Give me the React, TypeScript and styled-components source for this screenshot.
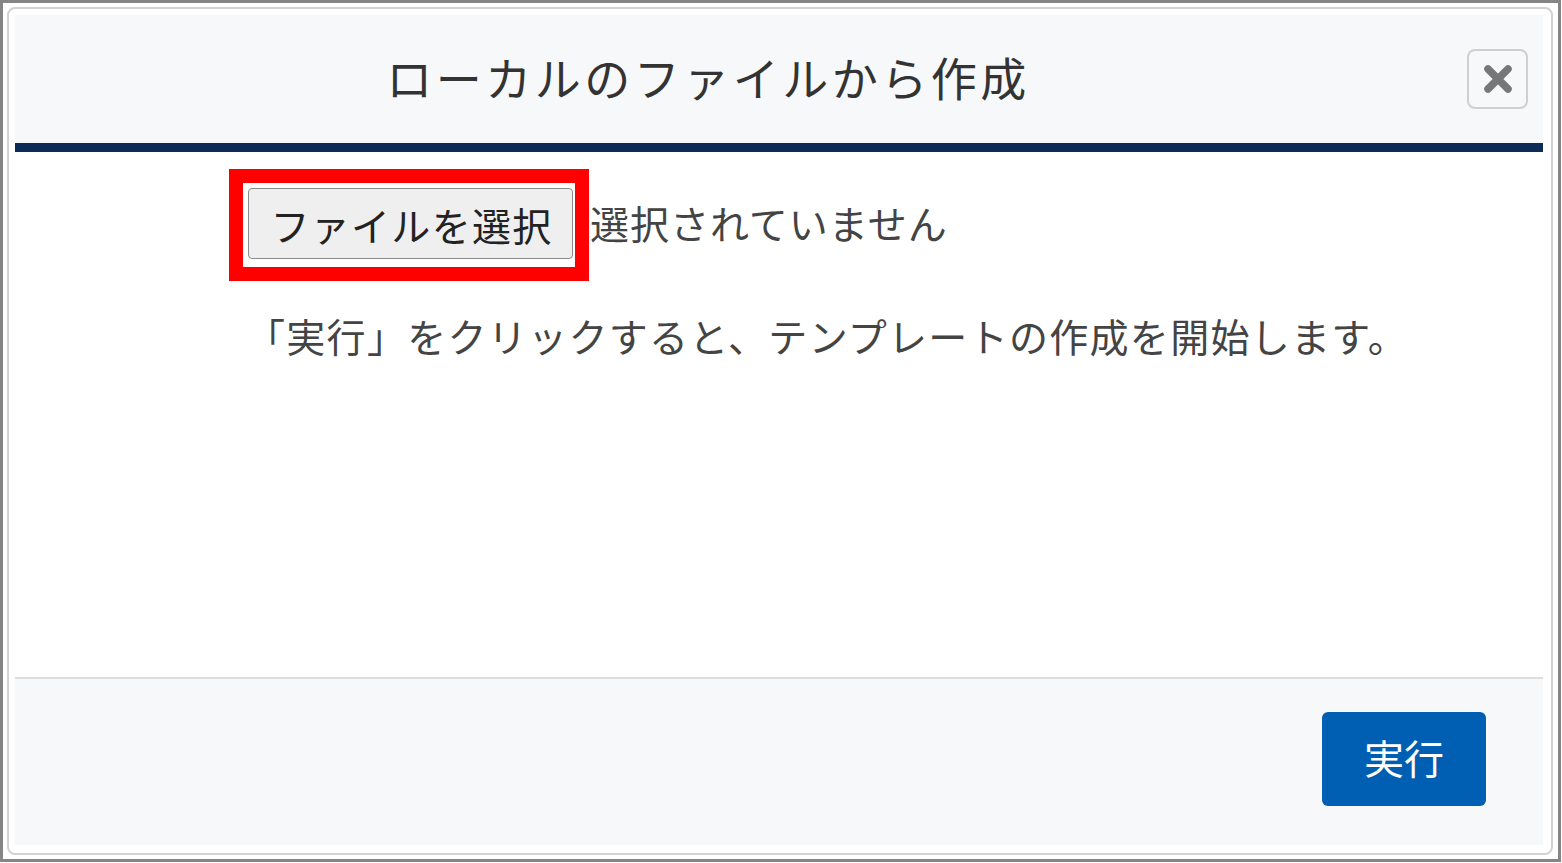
import React from "react";
import styled, { createGlobalStyle } from "styled-components";

const GlobalStyle = createGlobalStyle`
  html, body {
    margin: 0;
    padding: 0;
    background: #ffffff;
  }
  * {
    box-sizing: border-box;
  }
`;

const FONT = `"Noto Sans CJK JP", "Noto Sans", sans-serif`;

export default function App() {
  return (
    <>
      <GlobalStyle />
      <Frame>
        <Card>
          <Header>
            <Title>ローカルのファイルから作成</Title>
            <CloseButton aria-label="閉じる">
              <svg width="32" height="32" viewBox="0 0 32 32">
                <path
                  d="M6 6 L26 26 M26 6 L6 26"
                  stroke="#777"
                  strokeWidth="7.5"
                  strokeLinecap="round"
                />
              </svg>
            </CloseButton>
          </Header>
          <Body>
            <FileRow>
              <Highlight>
                <FileButton>ファイルを選択</FileButton>
              </Highlight>
              <FileName>選択されていません</FileName>
            </FileRow>
            <Message>「実行」をクリックすると、テンプレートの作成を開始します。</Message>
          </Body>
          <Footer>
            <PrimaryButton>実行</PrimaryButton>
          </Footer>
        </Card>
      </Frame>
    </>
  );
}

const Frame = styled.div`
  width: 1561px;
  height: 862px;
  border: 3px solid #858585;
  padding: 4px 5px 4px 4px;
  font-family: ${FONT};
`;

const Card = styled.div`
  height: 100%;
  border: 2px solid #d2d2d2;
  border-radius: 8px;
  padding: 6px 8px 8px 6px;
  display: flex;
  flex-direction: column;
  background: #fff;
`;

const Header = styled.div`
  height: 137px;
  flex-shrink: 0;
  background: #f7f8fa;
  border-bottom: 9px solid #0d2b57;
  display: flex;
  align-items: center;
  padding: 0 15px 6px 0;
`;

const Title = styled.h2`
  flex: 1;
  margin: 0;
  padding-right: 66px;
  text-align: center;
  font-size: 46px;
  font-weight: 400;
  letter-spacing: 3.5px;
  color: #333;
`;

const CloseButton = styled.button`
  width: 61px;
  height: 60px;
  margin-top: 6px;
  border: 2px solid #cfcfcf;
  border-radius: 8px;
  background: #f7f8fa;
  display: flex;
  align-items: center;
  justify-content: center;
  padding: 0;
`;

const Body = styled.div`
  flex: 1;
  padding: 17px 0 0 214px;
  border-bottom: 2px solid #dddddd;
`;

const FileRow = styled.div`
  display: flex;
  align-items: center;
`;

const Highlight = styled.div`
  border: 14px solid #ff0000;
  padding: 5px 2px 8px 5px;
`;

const FileButton = styled.button`
  width: 325px;
  height: 71px;
  border: 1px solid #8a8a8a;
  border-radius: 4px;
  background: #efefef;
  font-family: ${FONT};
  font-size: 39px;
  letter-spacing: 1.3px;
  color: #222;
  padding: 0 0 0 2px;
`;

const FileName = styled.span`
  font-size: 39px;
  letter-spacing: 1px;
  color: #444;
  padding: 0 0 6px 1px;
`;

const Message = styled.p`
  margin: 25px 0 0 17px;
  font-size: 39px;
  letter-spacing: 1.3px;
  line-height: 1.5;
  color: #444;
`;

const Footer = styled.div`
  height: 166px;
  flex-shrink: 0;
  background: #f7f8fa;
  display: flex;
  justify-content: flex-end;
  align-items: flex-start;
  padding: 33px 57px 0 0;
`;

const PrimaryButton = styled.button`
  width: 164px;
  height: 94px;
  border: none;
  border-radius: 6px;
  background: #005fb2;
  color: #fff;
  font-family: ${FONT};
  font-size: 40px;
  padding: 0 0 4px;
`;
